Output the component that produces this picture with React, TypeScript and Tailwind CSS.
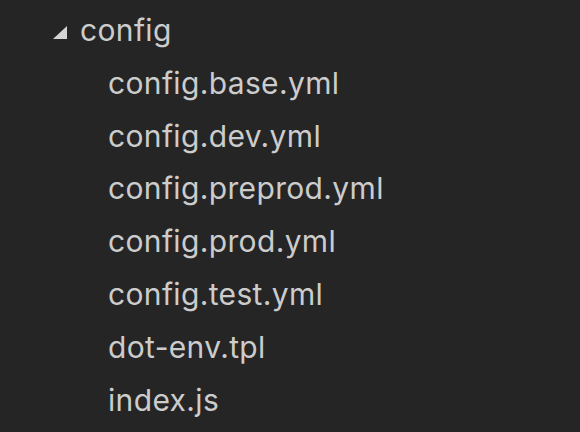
const files = [
  'config.base.yml',
  'config.dev.yml',
  'config.preprod.yml',
  'config.prod.yml',
  'config.test.yml',
  'dot-env.tpl',
  'index.js',
];

export default function App() {
  return (
    <div
      className="h-[432px] w-[580px] overflow-hidden bg-[#252526] pt-[3px] text-[30px] tracking-[0.35px] text-[#cccccc]"
      style={{ fontFamily: 'Inter, "Noto Sans", sans-serif' }}
    >
      <div className="flex h-[54px] items-center pl-[53px]">
        <svg width="14" height="13" viewBox="0 0 14 13" className="mr-[13px] mt-[4px]">
          <polygon points="14,0 14,13 0,13" fill="#d4d4d4" />
        </svg>
        <span>config</span>
      </div>
      {files.map((name) => (
        <div key={name} className="flex h-[52.8px] items-center pl-[108px]">
          {name}
        </div>
      ))}
    </div>
  );
}
